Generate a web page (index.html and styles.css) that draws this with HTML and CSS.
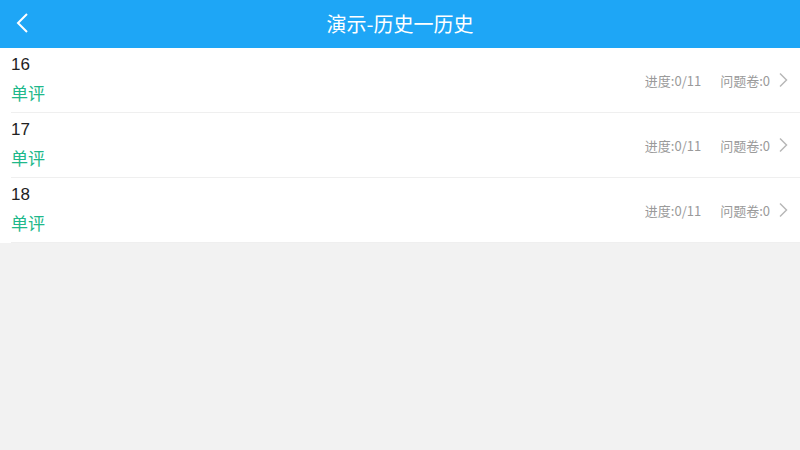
FILE: index.html
```html
<!DOCTYPE html>
<html lang="zh">
<head>
<meta charset="utf-8">
<link rel="stylesheet" href="styles.css">
</head>
<body>
<header class="bar">
  <span class="back"><svg width="14" height="22" viewBox="0 0 14 22"><path d="M11 2 L2 11 L11 20" fill="none" stroke="#fff" stroke-width="2"/></svg></span>
  <h1 class="title">演示-历史一历史</h1>
</header>
<ul class="list">
  <li class="row">
    <div class="left"><div class="num">16</div><div class="tag">单评</div></div>
    <div class="right"><span>进度:0/11</span><span>问题卷:0</span><svg class="chev" width="10" height="16" viewBox="0 0 10 16"><path d="M2 1.5 L8.5 8 L2 14.5" fill="none" stroke="#b8b8b8" stroke-width="1.5"/></svg></div>
  </li>
  <li class="row">
    <div class="left"><div class="num">17</div><div class="tag">单评</div></div>
    <div class="right"><span>进度:0/11</span><span>问题卷:0</span><svg class="chev" width="10" height="16" viewBox="0 0 10 16"><path d="M2 1.5 L8.5 8 L2 14.5" fill="none" stroke="#b8b8b8" stroke-width="1.5"/></svg></div>
  </li>
  <li class="row">
    <div class="left"><div class="num">18</div><div class="tag">单评</div></div>
    <div class="right"><span>进度:0/11</span><span>问题卷:0</span><svg class="chev" width="10" height="16" viewBox="0 0 10 16"><path d="M2 1.5 L8.5 8 L2 14.5" fill="none" stroke="#b8b8b8" stroke-width="1.5"/></svg></div>
  </li>
</ul>
</body>
</html>
```
FILE: styles.css
```css
html, body {
  margin: 0;
  padding: 0;
  background: #f2f2f2;
  font-family: "Noto Sans CJK SC", "Noto Sans", sans-serif;
}
.bar {
  height: 48px;
  background: #1ea6f6;
  display: flex;
  align-items: center;
  justify-content: center;
  position: relative;
}
.back {
  position: absolute;
  left: 16px;
  top: 12px;
  display: block;
  height: 22px;
}
.title {
  margin: 0;
  color: #fff;
  font-size: 20px;
  font-weight: normal;
  line-height: 1;
}
.list {
  list-style: none;
  margin: 0;
  padding: 0;
  background: #fff;
}
.row {
  height: 64px;
  margin-left: 11px;
  border-bottom: 1px solid #efefef;
  display: flex;
  align-items: center;
  justify-content: space-between;
}
.left {
  display: flex;
  flex-direction: column;
  gap: 5px;
  padding-bottom: 3px;
}
.num {
  font-family: "Liberation Sans", "Noto Sans", sans-serif;
  font-size: 17px;
  color: #222;
  line-height: 23px;
}
.tag {
  font-size: 17px;
  color: #20b88a;
  line-height: 23px;
}
.right {
  display: flex;
  align-items: center;
  font-size: 13px;
  color: #9a9a9a;
  padding-right: 12px;
}
.right span + span {
  margin-left: 19px;
}
.chev {
  margin-left: 8px;
}
```
